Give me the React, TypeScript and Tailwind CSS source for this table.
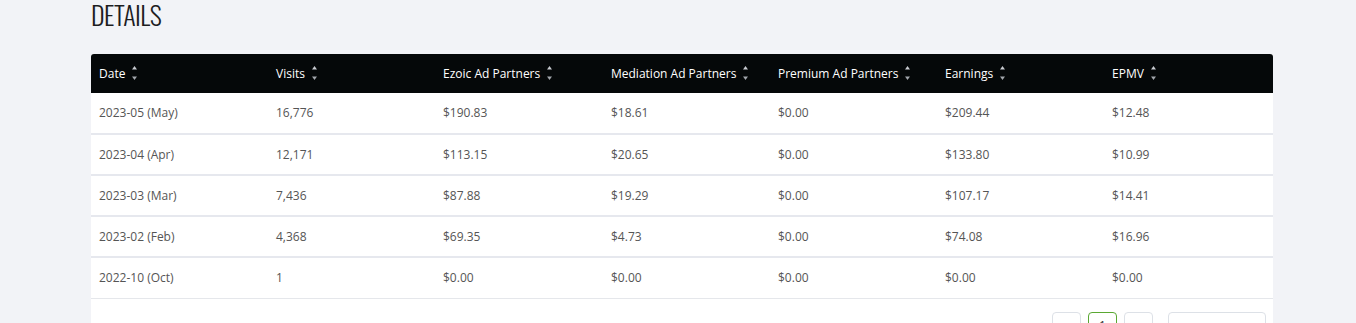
import React from 'react';

const rows = [
  ['2023-05 (May)', '16,776', '$190.83', '$18.61', '$0.00', '$209.44', '$12.48'],
  ['2023-04 (Apr)', '12,171', '$113.15', '$20.65', '$0.00', '$133.80', '$10.99'],
  ['2023-03 (Mar)', '7,436', '$87.88', '$19.29', '$0.00', '$107.17', '$14.41'],
  ['2023-02 (Feb)', '4,368', '$69.35', '$4.73', '$0.00', '$74.08', '$16.96'],
  ['2022-10 (Oct)', '1', '$0.00', '$0.00', '$0.00', '$0.00', '$0.00'],
];

const columns = [
  { label: 'Date', width: 'w-[177px]' },
  { label: 'Visits', width: 'w-[167px]' },
  { label: 'Ezoic Ad Partners', width: 'w-[168px]' },
  { label: 'Mediation Ad Partners', width: 'w-[167px]' },
  { label: 'Premium Ad Partners', width: 'w-[167px]' },
  { label: 'Earnings', width: 'w-[167px]' },
  { label: 'EPMV', width: 'w-[169px]' },
];

const SortIcon = () => (
  <svg width="7" height="16" viewBox="0 0 7 16" className="ml-[6px] inline-block align-middle -mt-[2px]">
    <path d="M3.5 1 L6 4.5 L1 4.5 Z" fill="#c9ccd1" />
    <path d="M3.5 15 L6 11.5 L1 11.5 Z" fill="#a3a7ad" />
  </svg>
);

const App: React.FC = () => {
  return (
    <div className="min-h-[323px] bg-[#f2f3f7] font-['Open_Sans',sans-serif] overflow-hidden">
      <div className="ml-[91px] w-[1182px] pt-[1px]">
        <h2 className="font-['Oswald','Liberation_Sans_Narrow','DejaVu_Sans_Condensed',sans-serif] text-[26px] leading-[27px] font-light text-[#1d1d1f] tracking-[-0.5px] [font-stretch:condensed]">
          DETAILS
        </h2>

        <div className="mt-[26px] bg-white rounded-t-[3px] overflow-hidden">
          <table className="w-full table-fixed border-collapse text-[12px]">
            <thead>
              <tr className="bg-[#050809] h-[39px]">
                {columns.map((col) => (
                  <th
                    key={col.label}
                    className={`${col.width} pl-[8px] text-left font-normal text-white whitespace-nowrap`}
                  >
                    {col.label}
                    <SortIcon />
                  </th>
                ))}
              </tr>
            </thead>
            <tbody>
              {rows.map((row, i) => (
                <tr
                  key={row[0]}
                  className={`h-[41px] ${i === rows.length - 1 ? 'border-b border-[#e5e7eb]' : 'border-b-2 border-[#e6e8ee]'}`}
                >
                  {row.map((cell, j) => (
                    <td key={j} className="pl-[8px] text-[#555] whitespace-nowrap">
                      {cell}
                    </td>
                  ))}
                </tr>
              ))}
            </tbody>
          </table>

          {/* Pagination */}
          <div className="flex justify-end items-start pt-[13px] pr-[7px] h-[40px]">
            <div className="flex gap-[7px]">
              <button className="w-[29px] h-[28px] border border-[#dde1e7] rounded-[4px] bg-white text-[12px] text-[#555]">
                ‹
              </button>
              <button className="w-[29px] h-[28px] border border-[#5aa832] rounded-[4px] bg-white text-[12px] text-[#333]">
                1
              </button>
              <button className="w-[29px] h-[28px] border border-[#dde1e7] rounded-[4px] bg-white text-[12px] text-[#555]">
                ›
              </button>
            </div>
            <div className="ml-[15px] w-[98px] h-[28px] border border-[#dde1e7] rounded-[4px] bg-white text-[12px] text-[#555] pl-[10px] pt-[6px]">
              20 / page
            </div>
          </div>
        </div>
      </div>
    </div>
  );
};

export default App;
